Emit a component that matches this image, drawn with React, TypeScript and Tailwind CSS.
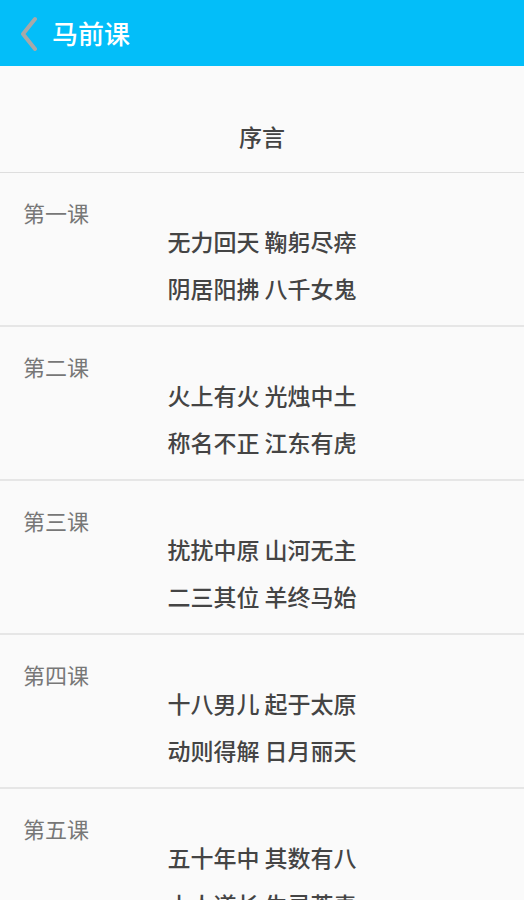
const lessons = [
  { title: "第一课", lines: ["无力回天 鞠躬尽瘁", "阴居阳拂 八千女鬼"] },
  { title: "第二课", lines: ["火上有火 光烛中土", "称名不正 江东有虎"] },
  { title: "第三课", lines: ["扰扰中原 山河无主", "二三其位 羊终马始"] },
  { title: "第四课", lines: ["十八男儿 起于太原", "动则得解 日月丽天"] },
  { title: "第五课", lines: ["五十年中 其数有八", "小人道长 生灵荼毒"] },
];

const font = {
  fontFamily: '"Noto Sans CJK SC", "Noto Sans", sans-serif',
};

export default function App() {
  return (
    <div className="h-[900px] overflow-hidden bg-[#fafafa]" style={font}>
      {/* Top bar */}
      <div className="flex h-[66px] items-center bg-[#03bef9]">
        <svg width="24" height="36" viewBox="0 0 24 36" className="ml-[18px]">
          <polyline
            points="17,4 5,19 17,34"
            fill="none"
            stroke="#a8a8a8"
            strokeWidth="4"
            strokeLinecap="round"
            strokeLinejoin="round"
          />
        </svg>
        <h1 className="ml-[10px] text-[26px] font-medium leading-none text-white">马前课</h1>
      </div>

      {/* Preface */}
      <div className="flex h-[107px] justify-center border-b border-[#dedede] pt-[55px]">
        <span className="text-[23px] font-medium leading-[30px] text-[#444]">序言</span>
      </div>

      {/* Lessons */}
      {lessons.map((l) => (
        <div key={l.title} className="h-[154px] border-b-2 border-[#e6e6e6] pt-[24px]">
          <p className="pl-[23px] text-[22px] leading-[30px] text-[#777]">{l.title}</p>
          <div className="-mt-[9px] flex flex-col items-center">
            <p className="text-[23px] font-medium leading-[47px] text-[#444]">{l.lines[0]}</p>
            <p className="text-[23px] font-medium leading-[47px] text-[#444]">{l.lines[1]}</p>
          </div>
        </div>
      ))}
    </div>
  );
}
